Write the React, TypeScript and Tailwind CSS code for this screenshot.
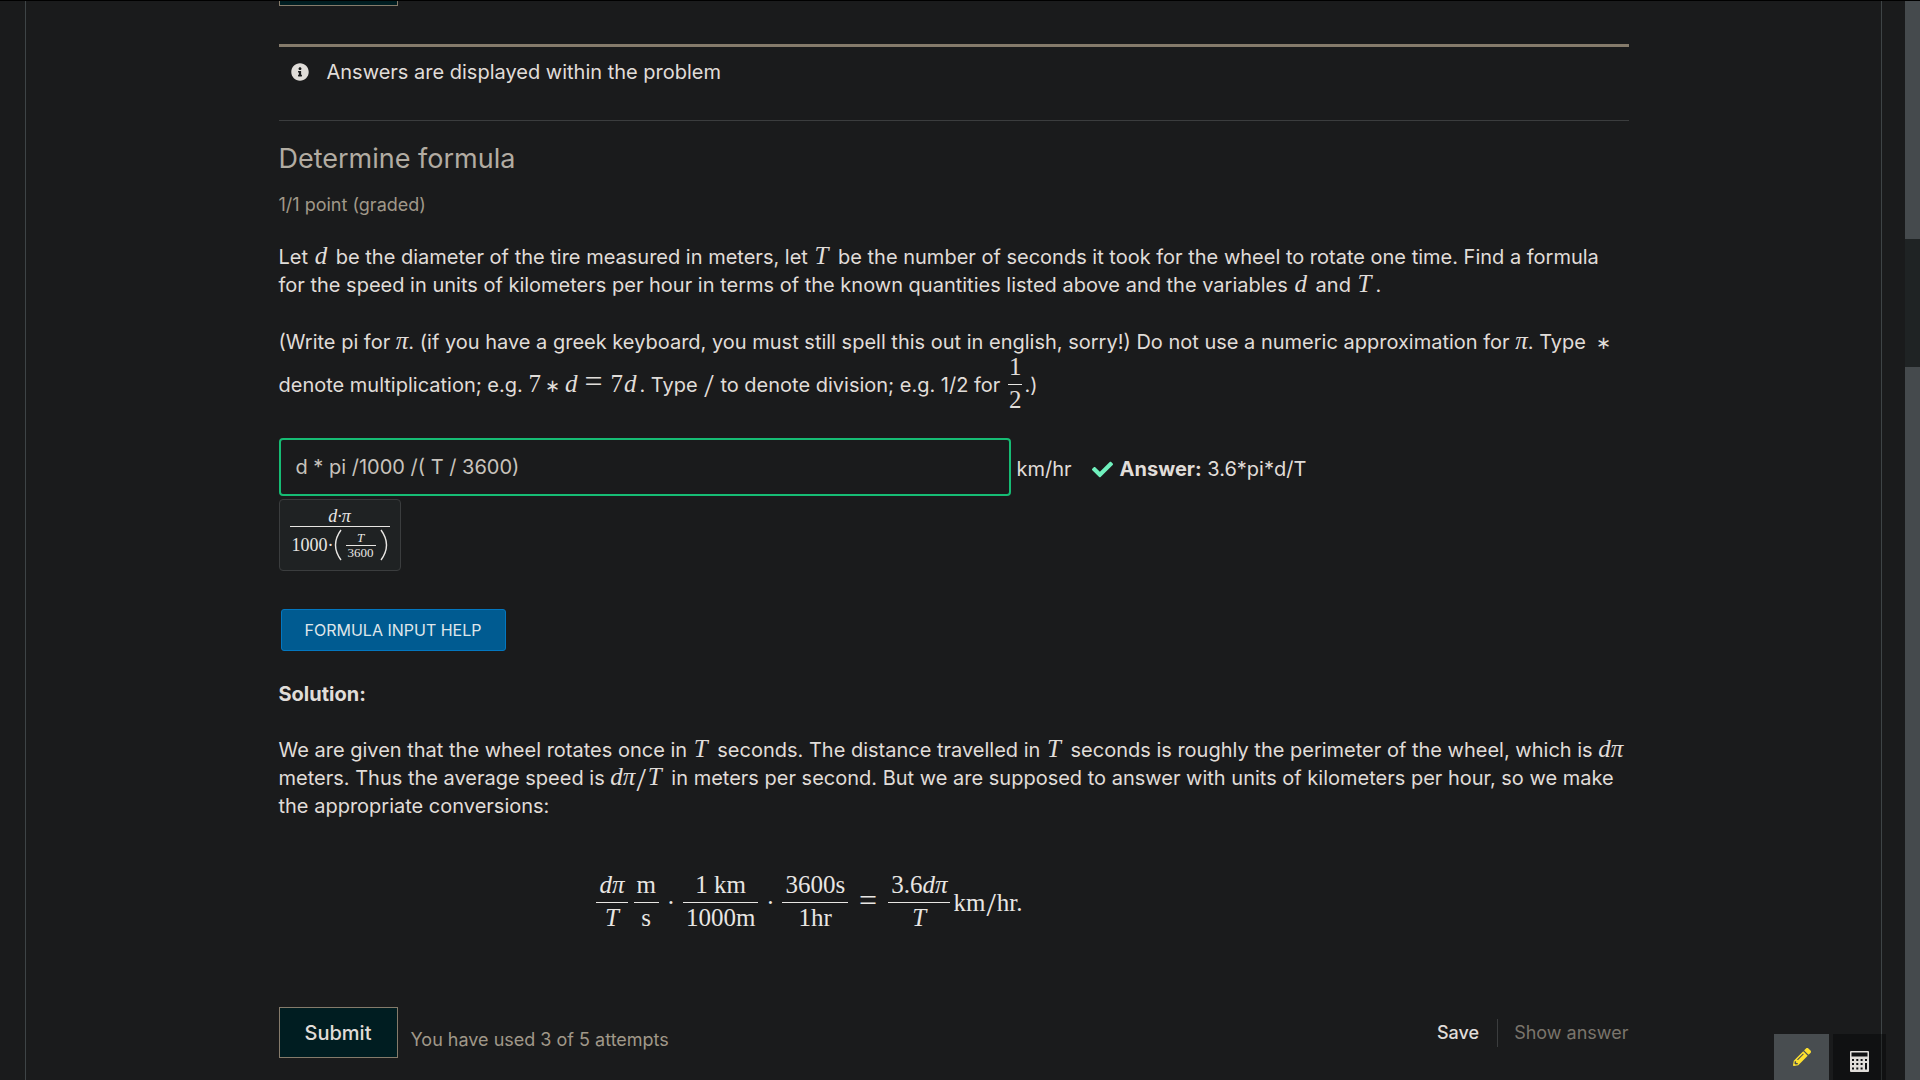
import type { ReactNode } from "react";
import { FaCheck, FaInfoCircle, FaPencilAlt } from "react-icons/fa";

function M({ children, up = false }: { children: ReactNode; up?: boolean }) {
  return (
    <span
      className={
        up
          ? "inline-block font-['Liberation_Serif',serif] text-[25px] leading-none"
          : "inline-block font-['Liberation_Serif',serif] text-[25px] italic leading-none"
      }
    >
      {children}
    </span>
  );
}

function D() {
  return (
    <M>
      <span className="pl-px pr-[3px]">d</span>
    </M>
  );
}

function T() {
  return (
    <M>
      <span className="pl-px pr-1">T</span>
    </M>
  );
}

function Slash() {
  return (
    <span className="inline-block px-px align-middle font-['Liberation_Serif',serif] text-[34px] leading-5">/</span>
  );
}

function Times() {
  return <span className="mx-1 inline-block font-['Liberation_Serif',serif] text-[18px] leading-5">∗</span>;
}

function Equals() {
  return <span className="ml-1 mr-2 inline-block font-['Liberation_Serif',serif] text-[32px] leading-5">=</span>;
}

function Frac({ top, bottom, tight = false }: { top: ReactNode; bottom: ReactNode; tight?: boolean }) {
  const pad = tight ? "h-8 px-px" : "h-8 px-[3px]";
  return (
    <span className="inline-flex flex-col items-center text-center leading-[30px]">
      <span className={pad}>{top}</span>
      <span className="h-px w-full bg-[#e8e6e3]" />
      <span className={pad}>{bottom}</span>
    </span>
  );
}

function CalculatorIcon() {
  return (
    <svg viewBox="0 0 19 21" width="19" height="21" fill="currentColor" aria-hidden="true">
      <path
        fillRule="evenodd"
        d="M1 0h17a1 1 0 0 1 1 1v19a1 1 0 0 1-1 1H1a1 1 0 0 1-1-1V1a1 1 0 0 1 1-1zM1.500 1.500v4h16v-4zM2 8v2h2v-2zM6.300 8v2h2v-2zM10.600 8v2h2v-2zM15 8v2h2v-2zM2 12v2h2v-2zM6.300 12v2h2v-2zM10.600 12v2h2v-2zM15 12v6.500h2v-6.500zM2 16.500v2h2v-2zM6.300 16.500v2h2v-2zM10.600 16.500v2h2v-2z"
      />
    </svg>
  );
}

function ParenLeft() {
  return (
    <svg viewBox="0 0 8 32" width="8" height="32" fill="none" stroke="currentColor" strokeWidth="1.400" aria-hidden="true">
      <path d="M7 1Q-4 16 7 31" />
    </svg>
  );
}

function ParenRight() {
  return (
    <svg viewBox="0 0 8 32" width="8" height="32" fill="none" stroke="currentColor" strokeWidth="1.400" aria-hidden="true">
      <path d="M1 1Q12 16 1 31" />
    </svg>
  );
}

export default function App() {
  return (
    <div className="flex h-screen overflow-hidden border-t border-black bg-[#1a1b1c] font-['Inter',sans-serif] text-[20px] leading-7 text-[#e0ddd9]">
      <main className="ml-[25px] mr-[23px] flex-1 border-x border-[#3e4446]">
        <div className="mx-auto max-w-[1350px]">
          <div className="h-[5px] w-[119px] border border-t-0 border-[#857b6b] bg-[#001d21]" />

          <div className="mt-[38px] flex h-[76px] items-start gap-[18px] border-t-[3px] border-[#857b6b] pl-3 pt-[11px]">
            <FaInfoCircle className="mt-[5px] size-[18px]" />
            <span>Answers are displayed within the problem</span>
          </div>

          <hr className="border-[#3b3d3e]" />

          <h3 className="mt-5 text-[27px] leading-9 text-[#b2aca2]">Determine formula</h3>
          <p className="mt-4 text-[18px] leading-6 text-[#a09889]">1/1 point (graded)</p>

          <p className="mt-[26px]">
            Let <D /> be the diameter of the tire measured in meters, let <T /> be the number of seconds it took for the
            wheel to rotate one time. Find a formula for the speed in units of kilometers per hour in terms of the known
            quantities listed above and the variables <D /> and <T />.
          </p>

          <div className="mt-[29px]">
            (Write pi for <M>π</M>. (if you have a greek keyboard, you must still spell this out in english, sorry!) Do
            not use a numeric approximation for <M>π</M>. Type <Times />
            <div className="flex h-[57px] items-center">
              <span className="whitespace-pre">
                denote multiplication; e.g. <M up>7</M>
                <Times />
                <D />
                <Equals />
                <M up>7</M>
                <D />. Type <Slash /> to denote division; e.g. 1/2 for{" "}
              </span>
              <span className="mx-[2px] font-['Liberation_Serif',serif] text-[25px]">
                <Frac tight top="1" bottom="2" />
              </span>
              <span>.)</span>
            </div>
          </div>

          <div className="mt-[25px] flex items-center">
            <input
              aria-label="Formula answer in kilometers per hour"
              defaultValue="d * pi /1000 /( T / 3600)"
              className="h-[58px] w-[732px] rounded-sm border-2 border-[#16bc74] bg-transparent px-[15px] text-[#c8c3bc] outline-none"
            />
            <div className="flex items-center pt-1">
              <span className="ml-[6px]">km/hr</span>
              <FaCheck className="ml-5 size-[21px] text-[#70f0bd]" />
              <span className="ml-[7px]">
                <b className="font-bold">Answer:</b> 3.6*pi*d/T
              </span>
            </div>
          </div>

          <div className="mt-[3px] flex h-[72px] w-fit flex-col items-center rounded-[4px] border border-[#3b3d3e] bg-[#1f2223] px-[10px] pt-[6px] font-['Liberation_Serif',serif] text-[18px] leading-5 text-[#e8e6e3]">
            <span className="italic">d·π</span>
            <span className="h-px w-full bg-[#e8e6e3]" />
            <span className="flex items-center px-[2px] pt-[2px]">
              1000·
              <ParenLeft />
              <span className="mx-1 flex flex-col items-center text-[13px] leading-[14px]">
                <span className="italic">T</span>
                <span className="h-px w-full bg-[#e8e6e3]" />
                <span className="px-[2px]">3600</span>
              </span>
              <ParenRight />
            </span>
          </div>

          <button className="ml-[2px] mt-[38px] block h-[42px] rounded-[3px] border border-[#0377c0] bg-[#005b91] px-[23px] text-[16px] leading-none text-[#dfe6ea]">
            FORMULA INPUT HELP
          </button>

          <p className="mt-[29px] font-bold">Solution:</p>

          <p className="mt-7">
            We are given that the wheel rotates once in <T /> seconds. The distance travelled in <T /> seconds is roughly
            the perimeter of the wheel, which is <M>dπ</M> meters. Thus the average speed is{" "}
            <span className="whitespace-nowrap">
              <M>dπ</M>
              <Slash />
              <T />
            </span>{" "}
            in meters per second. But we are supposed to answer with units of kilometers per hour, so we make the
            appropriate conversions:
          </p>

          <div className="mt-[50px] flex items-center justify-center pr-[288px] font-['Liberation_Serif',serif] text-[25px] leading-8 text-[#e8e6e3]">
            <Frac top={<i>dπ</i>} bottom={<i>T</i>} />
            <span className="w-[6px]" />
            <Frac top="m" bottom="s" />
            <span className="w-6 text-center">·</span>
            <Frac top="1 km" bottom="1000m" />
            <span className="w-6 text-center">·</span>
            <Frac top="3600s" bottom="1hr" />
            <span className="w-10 pl-1 text-center">
              <Equals />
            </span>
            <Frac top={<>3.6<i>dπ</i></>} bottom={<i>T</i>} />
            <span className="ml-[3px]">
              km
              <Slash />
              hr.
            </span>
          </div>

          <div className="mt-[72px] flex items-center">
            <button className="h-[51px] w-[119px] border border-[#857b6b] bg-[#001d21] font-medium">Submit</button>
            <span className="ml-[13px] mt-[14px] text-[18px] text-[#a09889]">You have used 3 of 5 attempts</span>
            <div className="ml-auto flex items-center text-[18px]">
              <button className="pr-[18px] font-medium">Save</button>
              <button disabled className="border-l border-[#3b3d3e] pl-4 text-[#7a756c]">
                Show answer
              </button>
            </div>
          </div>
        </div>
      </main>

      <div className="w-[15px] bg-[#454a4d]">
        <div className="mt-[238px] h-32 bg-[#1f2324]" />
      </div>

      <div className="fixed bottom-0 right-[34px] flex gap-1">
        <button aria-label="Notes" className="flex h-[46px] w-[55px] items-center justify-center bg-[#484d50] text-[#fde02f]">
          <FaPencilAlt className="size-[18px]" />
        </button>
        <button aria-label="Calculator" className="flex h-[46px] w-[53px] items-center justify-center bg-black/35 pt-2 text-[#e0ddd9]">
          <CalculatorIcon />
        </button>
      </div>
    </div>
  );
}
